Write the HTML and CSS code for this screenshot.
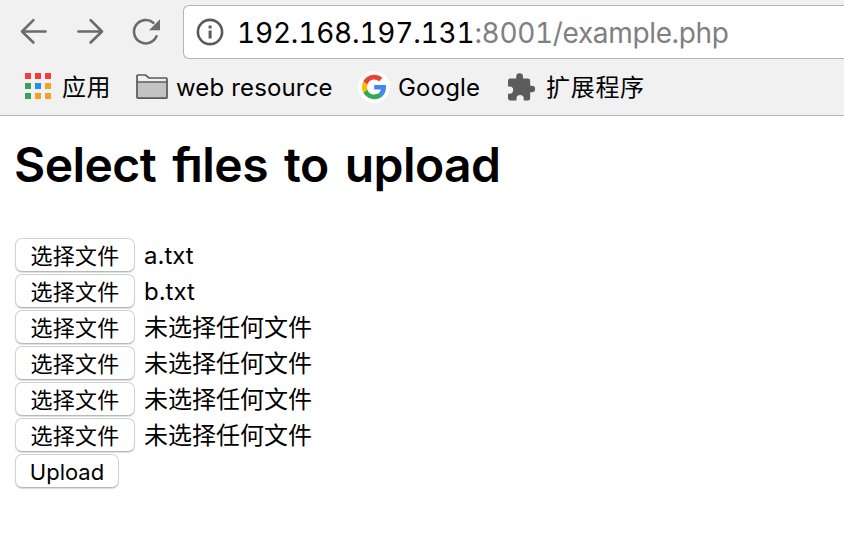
FILE: index.html
```html
<!DOCTYPE html>
<html lang="zh-CN">
<head>
<meta charset="utf-8">
<title>Upload</title>
<link rel="stylesheet" href="styles.css">
</head>
<body>
<header class="browser">
  <div class="toolbar">
    <svg class="nav" width="160" height="36" viewBox="16 14 160 36" fill="none" stroke="#6b6b6b" stroke-width="2.6" stroke-linecap="round" stroke-linejoin="round">
      <path d="M45.6 31.5H22M33.4 20.2L22 31.5l11.4 11"/>
      <path d="M78.4 31.5H102M90.6 20.2L102 31.5l-11.4 11"/>
      <path d="M153.3 22.8A11.7 11.7 0 1 0 156.5 36.3"/>
      <path d="M160 19.2v11h-11z" fill="#6b6b6b" stroke="none"/>
    </svg>
    <div class="address">
      <svg class="info" width="28" height="28" viewBox="0 0 28 28"><circle cx="14" cy="14" r="12.1" fill="none" stroke="#5a5a5a" stroke-width="2.6"/><path d="M12.6 7.5h3v3h-3zM12.6 12.5h3v8h-3z" fill="#5a5a5a"/></svg>
      <span class="url"><span class="host">192.168.197.131</span><span class="path">:8001/example.php</span></span>
    </div>
  </div>
  <nav class="bookmarks">
    <a class="mark apps"><svg width="26" height="26" viewBox="0 0 26 26"><path fill="#f73b3b" d="M0 0h6v6H0zM10 0h6v6h-6zM20 0h6v6h-6z"/><path fill="#39a05b" d="M0 10h6v6H0zM0 20h6v6H0z"/><path fill="#268bf3" d="M10 10h6v6h-6z"/><path fill="#f2a326" d="M20 10h6v6h-6zM10 20h6v6h-6zM20 20h6v6h-6z"/></svg><span>应用</span></a>
    <a class="mark folder"><svg width="32" height="26" viewBox="0 0 32 26"><path d="M1 24V2.200Q1 1 2.200 1H10l3 3h17q1 0 1 1v19H2q-1 0-1-1z" fill="#f1f1f1"/><path d="M1.500 8.500h29V24h-29z" fill="#c3c3c3"/><path d="M1 23V2Q1 1 2 1H9.500L13 4h17q1 0 1 1v18.200q0 1-1 1H2q-1 0-1-1zM1 8h30" fill="none" stroke="#585858" stroke-width="1.7"/></svg><span>web resource</span></a>
    <a class="mark google"><svg width="32" height="32" viewBox="0 0 32 32"><circle cx="16" cy="16" r="16" fill="#fff"/><g transform="translate(4 4)"><path fill="#4285f4" d="M24 12.300c0-.9-.1-1.500-.2-2.300H12.200v4.600h6.700c-.3 1.500-1.200 2.900-2.500 3.800l3.900 3c2.300-2.200 3.700-5.300 3.700-9.100z"/><path fill="#34a853" d="M12.200 24.200c3.300 0 6.100-1.100 8.100-2.900l-3.900-3c-1.100.7-2.500 1.200-4.200 1.200-3.200 0-5.900-2.200-6.800-5.100l-4.100 3.200c2 3.900 6.100 6.600 10.900 6.600z"/><path fill="#fbbc05" d="M5.400 14.400a7.300 7.300 0 0 1 0-4.700L1.300 6.500a12 12 0 0 0 0 11z"/><path fill="#ea4335" d="M12.200 4.600c2.300 0 3.800 1 4.700 1.800l3.500-3.400C18.200 1 15.500-.2 12.200-.2 7.400-.2 3.300 2.600 1.300 6.500l4.100 3.200c.9-2.900 3.600-5.100 6.800-5.100z"/></g></svg><span>Google</span></a>
    <a class="mark ext"><svg width="28" height="28" viewBox="0 0 28 28"><path fill="#5c5c5c" d="M2 5.500h6.200V3.600a3.400 3.400 0 0 1 6.800 0v1.900h5q2.200 0 2.200 2.200v5h1.600a3.300 3.300 0 0 1 0 6.600h-1.600v5.900q0 2.200-2.200 2.200h-4.300v-1.800a3.600 3.600 0 0 0-7.200 0v1.800H2.200Q0 27.400 0 25.200v-4.500h1.600a3.600 3.600 0 0 0 0-7.200H0v-6q0-2 2-2z"/></svg><span>扩展程序</span></a>
  </nav>
</header>
<main class="page">
  <h1>Select f<span class="stem">i</span>les to upload</h1>
  <form class="form">
    <div class="row"><button type="button">选择文件</button><span class="name">a.txt</span></div>
    <div class="row"><button type="button">选择文件</button><span class="name">b.txt</span></div>
    <div class="row"><button type="button">选择文件</button><span class="name">未选择任何文件</span></div>
    <div class="row"><button type="button">选择文件</button><span class="name">未选择任何文件</span></div>
    <div class="row"><button type="button">选择文件</button><span class="name">未选择任何文件</span></div>
    <div class="row"><button type="button">选择文件</button><span class="name">未选择任何文件</span></div>
    <div class="row"><button type="button" class="submit">Upload</button></div>
  </form>
</main>
</body>
</html>
```
FILE: styles.css
```css
* { box-sizing: border-box; }
body {
  margin: 0;
  height: 550px;
  overflow: hidden;
  background: #fff;
  color: #000;
  font-family: Inter, "Noto Sans CJK SC", sans-serif;
}
svg { display: block; flex: none; }
.browser { height: 116px; background: #f1f1f1; border-bottom: 1px solid #b4b4b4; overflow: hidden; }
.toolbar { display: flex; padding: 5px 0 0 16px; }
.nav { margin-top: 9px; }
.address {
  flex: 1;
  display: flex;
  align-items: center;
  height: 54px;
  margin-left: 7px;
  padding-left: 12px;
  background: #fff;
  border: 1px solid #b5b5b5;
  border-right: 0;
  border-radius: 6px 0 0 6px;
}
.url { margin: 2px 0 0 13px; font-size: 28px; line-height: 36px; white-space: nowrap; font-variant-numeric: tabular-nums; }
.host { letter-spacing: -0.2px; }
.path { color: #808080; letter-spacing: -0.35px; }
.bookmarks { display: flex; align-items: center; height: 56px; padding-left: 25px; font-size: 24px; line-height: 32px; }
.mark { display: flex; align-items: center; white-space: nowrap; }
.mark svg { margin: 0 11px 2px 0; }
.mark span { padding-top: 1px; }
.apps { width: 111px; letter-spacing: 0.4px; }
.folder { width: 222px; letter-spacing: 0.15px; }
.folder svg { margin: 0 8px 1px 0; }
.google { width: 149px; letter-spacing: 0.15px; }
.google svg { margin: 0 8px 1px 0; }
.ext { letter-spacing: 0.7px; }
.ext svg { margin: 0 10px 0 1px; }
.page { padding: 19px 14px 0; }
h1 { margin: 0; height: 102px; font-size: 48px; line-height: 60px; font-weight: 590; word-spacing: 4.5px; letter-spacing: -0.55px; white-space: nowrap; }
.stem { position: relative; display: inline-block; clip-path: inset(21px 0 0 -6px); }
.stem::before { content: ""; position: absolute; top: 21px; left: -4px; width: 10px; height: 4px; background: #000; }
.form { padding-left: 1px; }
.row { display: flex; align-items: center; height: 36px; }
.row button {
  width: 120px;
  height: 34px;
  padding: 2px 0 0;
  background: #fff;
  border: 1px solid #d2d2d2;
  border-bottom-color: #b8b8b8;
  border-radius: 7px;
  box-shadow: 0 1px 1px #ddd;
  color: #000;
  font: 22px/30px Inter, "Noto Sans CJK SC", sans-serif;
  letter-spacing: 0.3px;
}
.row .submit { width: 104px; letter-spacing: 0; }
.name { margin-left: 9px; padding-top: 1px; font-size: 24px; line-height: 34px; }
```
